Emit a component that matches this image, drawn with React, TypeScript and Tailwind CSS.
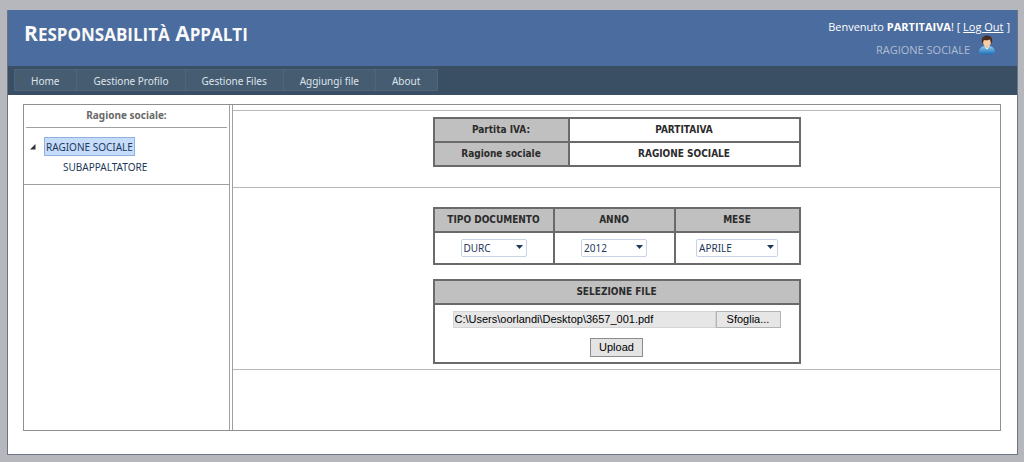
import React, { useState } from 'react';

const navItems = ['Home', 'Gestione Profilo', 'Gestione Files', 'Aggiungi file', 'About'];

const UserIcon: React.FC = () => (
    <svg width="18" height="20" viewBox="0 0 18 20" aria-hidden="true">
        <defs>
            <linearGradient id="shirt" x1="0" y1="0" x2="0" y2="1">
                <stop offset="0" stopColor="#8cc8f0" />
                <stop offset="1" stopColor="#1f6fb8" />
            </linearGradient>
        </defs>
        <path d="M1 17.500C1 13.500 3.500 11.500 6 11h6c2.500.5 5 2.500 5 6.500 0 1.500-3 2-8 2s-8-.5-8-2z" fill="url(#shirt)" />
        <path d="M6.500 10.500h5L10.500 13 9 14.500 7.500 13z" fill="#f4f8fc" />
        <path d="M7.500 9h3v3L9 13l-1.500-1z" fill="#e0aa80" />
        <ellipse cx="9" cy="7" rx="4" ry="4.500" fill="#f6cda6" />
        <path d="M4 7.500C3 3 5.500.5 9 .5s6 2.500 5 7l-1 1.500c0-2-.5-3.500-1.500-4.500-1.500 1-4.500 1-5.500.5C5.300 6 5 7.500 5 9z" fill="#4b2e20" />
    </svg>
);

interface DropDownProps {
    label: string;
    options: string[];
    className: string;
}

const DropDown: React.FC<DropDownProps> = ({ label, options, className }) => {
    const [value, setValue] = useState(options[0]);

    return (
        <div className={`relative inline-block align-middle ${className}`}>
            <select
                aria-label={label}
                value={value}
                onChange={(e) => setValue(e.target.value)}
                className="block w-full h-[18px] appearance-none rounded-xs border border-[#c6d3e4] bg-white pl-[2px] text-[10px] leading-4 text-[#1e395b]"
            >
                {options.map((option) => (
                    <option key={option}>{option}</option>
                ))}
            </select>
            <svg className="pointer-events-none absolute right-1 top-[6px]" width="7" height="4" viewBox="0 0 7 4" aria-hidden="true">
                <path d="M0 0h7L3.500 4z" fill="#1e395b" />
            </svg>
        </div>
    );
};

const tableClass = "w-full table-fixed border-collapse border-2 border-[#6a6a6a] text-center font-['DejaVu_Sans_Condensed','DejaVu_Sans',sans-serif] text-[10px] leading-4 text-[#2b2b2b]";
const headClass = "h-6 border-2 border-[#6a6a6a] bg-[#c0c0c0] p-0 font-bold";
const cellClass = 'border-2 border-[#6a6a6a] p-0';

const App: React.FC = () => {
    return (
        <div className="min-h-screen bg-[#b5b7bd] pt-[10px] pr-[6px] pb-[7px] pl-[7px] font-['Noto_Sans','Open_Sans',sans-serif] text-[#696969]">
            <div className="flex min-h-[445px] flex-col border border-t-0 border-[#6a7683] bg-white">
                <header className="flex h-14 justify-between bg-[#4b6c9e] pr-[7px] pl-4">
                    <h1 className="pt-[9px] font-['Open_Sans',sans-serif] text-[21px] leading-7 font-bold text-[#f9f9f9] uppercase">
                        R<span className="text-[17px]">esponsabilità</span> A<span className="text-[17px]">ppalti</span>
                    </h1>
                    <div className="flex flex-col items-end pt-[9px] font-['Open_Sans',sans-serif] text-[11px] leading-4 text-white">
                        <p>
                            Benvenuto <b>PARTITAIVA</b>! [ <a href="#logout" className="underline">Log Out</a> ]
                        </p>
                        <div className="flex gap-2 pr-[14px] text-[#b0bdd2]">
                            <span className="pt-[7px]">RAGIONE SOCIALE</span>
                            <UserIcon />
                        </div>
                    </div>
                </header>

                <nav className="flex bg-[#3a4f63] pt-[3px] pb-1 pl-[6px]">
                    {navItems.map((item) => (
                        <a
                            key={item}
                            href="#"
                            className="h-[22px] border border-[#4e667d] border-l-0 bg-[#465c71] px-4 text-[10px] leading-[22px] whitespace-nowrap text-[#dde4ec] first:border-l first:pr-[17px] last:pr-[17px]"
                        >
                            {item}
                        </a>
                    ))}
                </nav>

                <main className="mr-4 ml-[15px] mt-[9px] mb-[23px] flex grow border border-[#8f8f8f]">
                    <aside className="w-[206px] shrink-0 border-r border-[#a0a0a0] text-[11px]">
                        <h2 className="mx-[2px] h-[23px] border-b border-[#a0a0a0] text-center text-[10px] leading-5 font-bold">Ragione sociale:</h2>
                        <div className="h-[57px] border-b border-[#a0a0a0] pt-[9px] pl-[5px] text-[10px] text-[#1e395b]">
                            <div className="flex items-center">
                                <svg width="8" height="6" viewBox="0 0 8 6" aria-hidden="true">
                                    <path d="M6.500 0v5.500H1z" fill="#333" />
                                </svg>
                                <button className="ml-[7px] h-[19px] border border-[#8fb1e0] bg-[#c5dcfb] px-px leading-4">RAGIONE SOCIALE</button>
                            </div>
                            <button className="ml-[34px] block h-5 leading-[22px]">SUBAPPALTATORE</button>
                        </div>
                    </aside>

                    <div className="ml-[2px] grow border-l border-[#a0a0a0]">
                        <section className="mt-[5px] h-[78px] border-y border-[#b8b8b8] pt-[6px]">
                            <div className="mx-auto w-[368px]">
                                <table className={tableClass}>
                                    <tbody>
                                        <tr>
                                            <th scope="row" className={`${headClass} w-[135px]`}>Partita IVA:</th>
                                            <td className={`${cellClass} font-bold`}>PARTITAIVA</td>
                                        </tr>
                                        <tr>
                                            <th scope="row" className={headClass}>Ragione sociale</th>
                                            <td className={`${cellClass} font-bold`}>RAGIONE SOCIALE</td>
                                        </tr>
                                    </tbody>
                                </table>
                            </div>
                        </section>

                        <section className="h-[182px] border-b border-[#b8b8b8] pt-[19px]">
                            <div className="mx-auto flex w-[368px] flex-col gap-[14px]">
                                <table className={tableClass}>
                                    <thead>
                                        <tr>
                                            <th className={`${headClass} w-[120px]`}>TIPO DOCUMENTO</th>
                                            <th className={`${headClass} w-[121px]`}>ANNO</th>
                                            <th className={headClass}>MESE</th>
                                        </tr>
                                    </thead>
                                    <tbody className="font-['Noto_Sans',sans-serif]">
                                        <tr className="h-8">
                                            <td className={cellClass}>
                                                <DropDown label="Tipo documento" options={['DURC', 'DURF', 'F24']} className="w-[66px]" />
                                            </td>
                                            <td className={cellClass}>
                                                <DropDown label="Anno" options={['2012', '2011', '2010']} className="w-[66px]" />
                                            </td>
                                            <td className={cellClass}>
                                                <DropDown label="Mese" options={['APRILE', 'MAGGIO', 'GIUGNO']} className="w-[82px]" />
                                            </td>
                                        </tr>
                                    </tbody>
                                </table>

                                <table className={tableClass}>
                                    <thead>
                                        <tr>
                                            <th className={headClass}>SELEZIONE FILE</th>
                                        </tr>
                                    </thead>
                                    <tbody className="font-['Liberation_Sans',Arial,sans-serif]">
                                        <tr className="h-[59px]">
                                            <td className={cellClass}>
                                                <div className="mx-[18px] flex h-[17px] text-[11px] text-black">
                                                    <input
                                                        type="text"
                                                        readOnly
                                                        aria-label="File selezionato"
                                                        value="C:\Users\oorlandi\Desktop\3657_001.pdf"
                                                        className="min-w-0 grow border border-[#d4d4d4] bg-[#e6e6e6] px-px"
                                                    />
                                                    <button className="w-[65px] border border-[#b4b4b4] bg-[#e6e6e6] leading-[14px]">Sfoglia...</button>
                                                </div>
                                                <button className="mt-[10px] h-[19px] w-[53px] border border-[#8c8c8c] bg-[#e4e4e4] text-[11px] leading-4 text-black">
                                                    Upload
                                                </button>
                                            </td>
                                        </tr>
                                    </tbody>
                                </table>
                            </div>
                        </section>
                    </div>
                </main>
            </div>
        </div>
    );
};

export default App;
